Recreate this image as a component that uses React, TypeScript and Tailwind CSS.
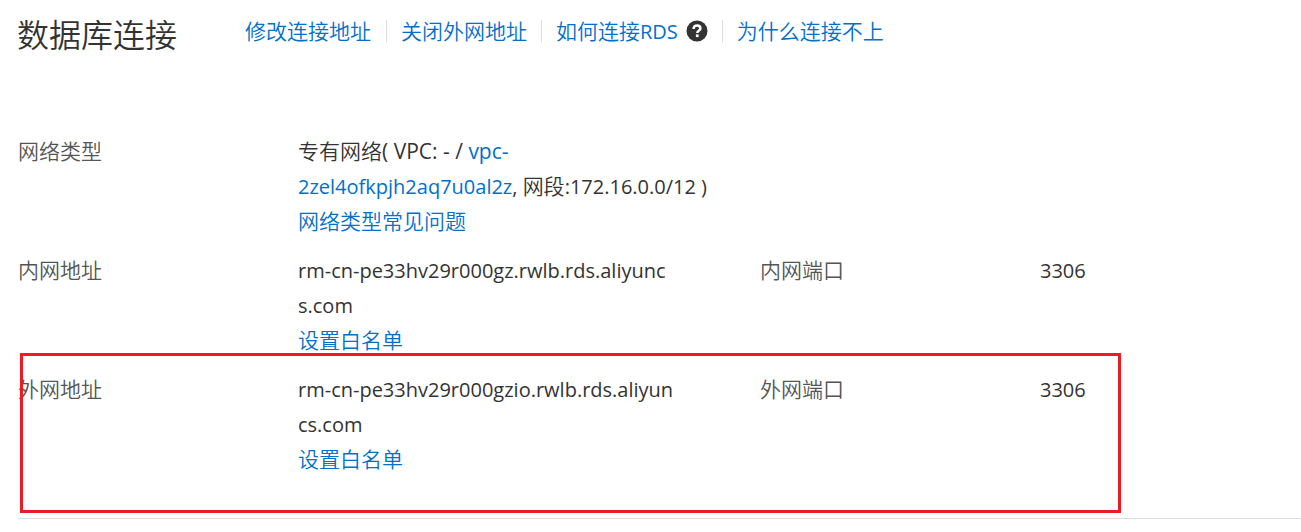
import type { ReactNode } from "react";

function Link({ children }: { children: ReactNode }) {
  return (
    <a href="#" className="text-[#0070cc]">
      {children}
    </a>
  );
}

function Zh({ children }: { children: ReactNode }) {
  return (
    <span lang="zh-CN" className="font-['Noto_Sans_CJK_SC',sans-serif] text-[21px] leading-none font-[350]">
      {children}
    </span>
  );
}

function HelpIcon() {
  return (
    <svg viewBox="0 0 22 22" className="size-[22px]" role="img" aria-label="帮助">
      <circle cx="11" cy="11" r="10.5" fill="#333" />
      <path d="M7.6 9c0-2.2 1.3-3.4 3.4-3.4s3.4 1.1 3.4 2.8c0 2.2-3.1 2.2-3.1 4.6" fill="none" stroke="#fff" strokeWidth="2.5" />
      <rect x="9.9" y="14.4" width="2.7" height="2.7" fill="#fff" />
    </svg>
  );
}

function Host({ lines }: { lines: string[] }) {
  return (
    <>
      {lines.map((line) => (
        <div key={line} className="text-[20px]">{line}</div>
      ))}
      <div>
        <Link><Zh>设置白名单</Zh></Link>
      </div>
    </>
  );
}

function Row({ label, value, portLabel, port }: { label: string; value: ReactNode; portLabel?: string; port?: string }) {
  return (
    <dl className="flex pb-[14px]">
      <dt className="w-[280px] shrink-0 text-[#555]"><Zh>{label}</Zh></dt>
      <dd className="w-[462px] shrink-0">{value}</dd>
      {portLabel && <dt className="w-[280px] shrink-0 text-[#555]"><Zh>{portLabel}</Zh></dt>}
      {port && <dd className="text-[20px]">{port}</dd>}
    </dl>
  );
}

export default function App() {
  return (
    <main className="relative bg-white pl-[17px] font-['Open_Sans','Noto_Sans_CJK_SC',sans-serif] text-[21px] leading-[35px] text-[#333]">
      <header className="flex items-start pt-3">
        <h1 className="w-[228px] shrink-0 font-['Noto_Sans_CJK_SC',sans-serif] text-[32px] leading-[42px] font-[350]">数据库连接</h1>
        <nav className="flex items-center divide-x divide-[#ddd] pt-2 leading-[21px]">
          <span className="pr-[15px]"><Link><Zh>修改连接地址</Zh></Link></span>
          <span className="px-[14px]"><Link><Zh>关闭外网地址</Zh></Link></span>
          <span className="flex items-center gap-2 px-[14px]">
            <Link><Zh>如何连接</Zh><span className="text-[20px]">RDS</span></Link>
            <HelpIcon />
          </span>
          <span className="px-[14px]"><Link><Zh>为什么连接不上</Zh></Link></span>
        </nav>
      </header>
      <section className="ml-px border-b border-[#ddd] pt-20 pb-[27px]">
        <Row
          label="网络类型"
          value={
            <>
              <div><Zh>专有网络</Zh>( VPC: - / <Link>vpc-</Link></div>
              <div className="text-[20px]">
                <Link>2zel4ofkpjh2aq7u0al2z</Link>, <Zh>网段</Zh>:172.16.0.0/12 )
              </div>
              <div><Link><Zh>网络类型常见问题</Zh></Link></div>
            </>
          }
        />
        <Row label="内网地址" value={<Host lines={["rm-cn-pe33hv29r000gz.rwlb.rds.aliyunc", "s.com"]} />} portLabel="内网端口" port="3306" />
        <Row label="外网地址" value={<Host lines={["rm-cn-pe33hv29r000gzio.rwlb.rds.aliyun", "cs.com"]} />} portLabel="外网端口" port="3306" />
      </section>
      <div className="pointer-events-none absolute top-[353px] left-[20px] h-[160px] w-[1101px] border-3 border-[#ed1c24]" />
    </main>
  );
}
